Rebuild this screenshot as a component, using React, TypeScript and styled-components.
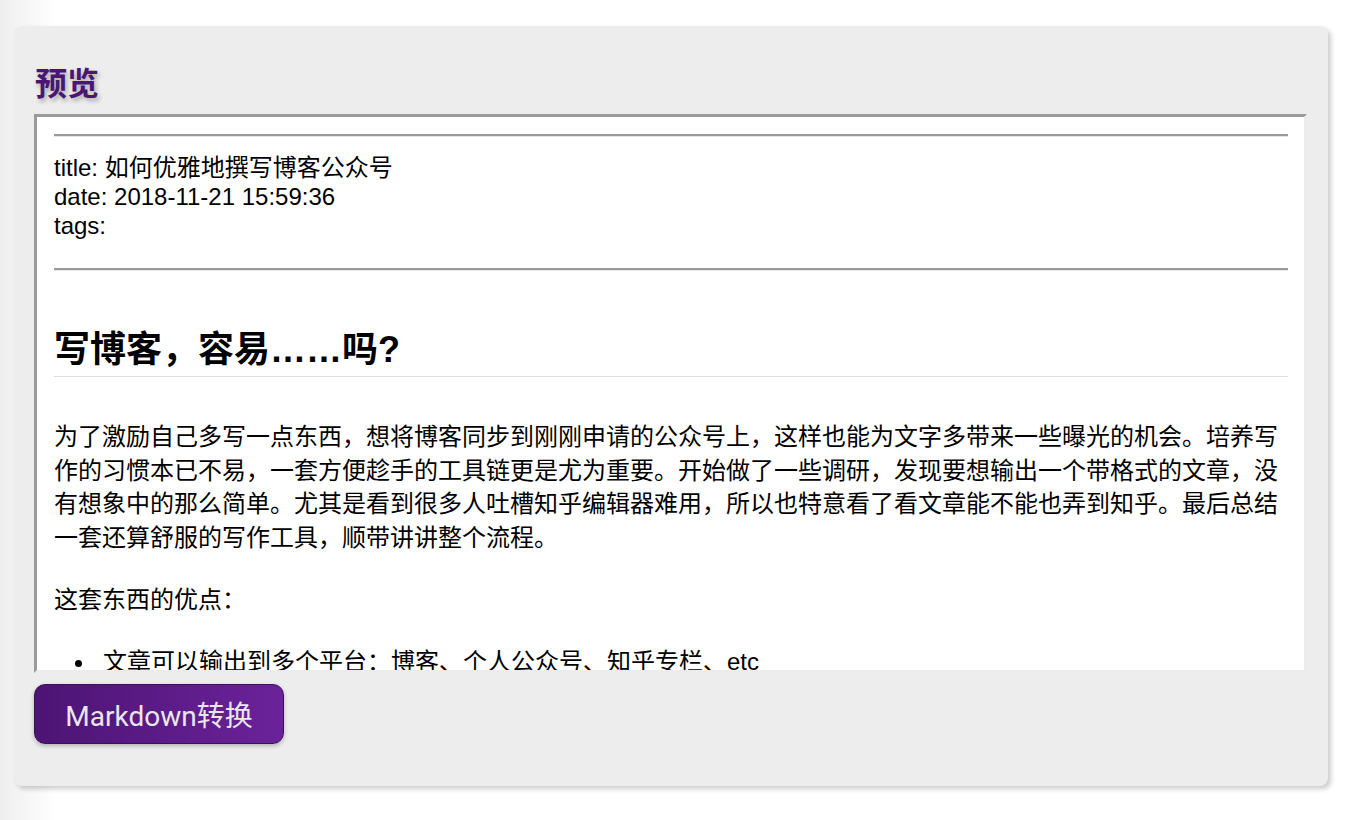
import React from "react";
import styled, { createGlobalStyle } from "styled-components";

const GlobalStyle = createGlobalStyle`
  html, body {
    margin: 0;
    padding: 0;
  }
  body {
    width: 1360px;
    height: 820px;
    overflow: hidden;
    background: linear-gradient(to right, #eeeeee 0px, #ffffff 56px);
    font-family: "Liberation Sans", "Noto Sans CJK SC", sans-serif;
    color: #000;
  }
`;

const Card = styled.section`
  box-sizing: border-box;
  margin: 26px 0 0 14px;
  width: 1314px;
  height: 760px;
  padding: 35px 21px 42px 20px;
  background: #ededed;
  border-radius: 8px;
  box-shadow: 3px 3px 5px rgba(0, 0, 0, 0.2);
  display: flex;
  flex-direction: column;
`;

const Title = styled.h1`
  margin: 0 0 13px 1px;
  font-family: "Noto Sans CJK SC", sans-serif;
  font-size: 32px;
  line-height: 40px;
  font-weight: 700;
  color: #4a1675;
  text-shadow: 2px 3px 4px rgba(0, 0, 0, 0.28);
`;

const Preview = styled.div`
  box-sizing: border-box;
  height: 559px;
  background: #fff;
  border-style: solid;
  border-width: 3px;
  border-color: #9a9a9a #ececec #ececec #9a9a9a;
  padding: 0 16px 0 17px;
  overflow: hidden;
  font-size: 24px;
`;

const Rule = styled.hr<{ $top: number }>`
  margin: ${(p) => p.$top}px 0 0;
  height: 0;
  border: 0;
  border-top: 2px solid #9a9a9a;
  border-bottom: 1px solid #e4e4e4;
`;

const FrontMatter = styled.p`
  margin: 16px 0 0;
  line-height: 29px;
`;

const Heading = styled.h2`
  margin: 56px 0 0;
  font-size: 36px;
  line-height: 45px;
  font-weight: 700;
  padding-bottom: 4px;
  border-bottom: 1px solid #dddddd;
`;

const Para = styled.p<{ $top: number }>`
  margin: ${(p) => p.$top}px 0 0;
  line-height: 33.5px;
`;

const List = styled.ul`
  margin: 28.5px 0 0;
  padding-left: 49px;
  line-height: 33.5px;
  list-style: none;
`;

const Item = styled.li`
  &::before {
    content: "";
    display: inline-block;
    width: 7px;
    height: 7px;
    border-radius: 50%;
    background: #000;
    margin-left: -28px;
    margin-right: 21px;
    vertical-align: middle;
  }
`;

const Button = styled.button`
  margin-top: 11px;
  width: 250px;
  height: 60px;
  border: 1px solid #3d0f5e;
  border-radius: 11px;
  background: linear-gradient(to right, #4c1474, #6b2299);
  color: #e9e6ec;
  font-family: Roboto, "Noto Sans CJK SC", sans-serif;
  font-size: 28px;
  font-weight: 400;
  box-shadow: 0 2px 4px rgba(0, 0, 0, 0.25);
  cursor: pointer;
  padding: 0;
`;

export default function App() {
  return (
    <>
      <GlobalStyle />
      <Card>
        <Title>预览</Title>
        <Preview>
          <Rule $top={17} />
          <FrontMatter>
            title: 如何优雅地撰写博客公众号
            <br />
            date: 2018-11-21 15:59:36
            <br />
            tags:
          </FrontMatter>
          <Rule $top={28} />
          <Heading>写博客，容易……吗?</Heading>
          <Para $top={43}>
            为了激励自己多写一点东西，想将博客同步到刚刚申请的公众号上，这样也能为文字多带来一些曝光的机会。培养写作的习惯本已不易，一套方便趁手的工具链更是尤为重要。开始做了一些调研，发现要想输出一个带格式的文章，没有想象中的那么简单。尤其是看到很多人吐槽知乎编辑器难用，所以也特意看了看文章能不能也弄到知乎。最后总结一套还算舒服的写作工具，顺带讲讲整个流程。
          </Para>
          <Para $top={29}>这套东西的优点：</Para>
          <List>
            <Item>文章可以输出到多个平台：博客、个人公众号、知乎专栏、etc</Item>
          </List>
        </Preview>
        <Button>Markdown转换</Button>
      </Card>
    </>
  );
}
